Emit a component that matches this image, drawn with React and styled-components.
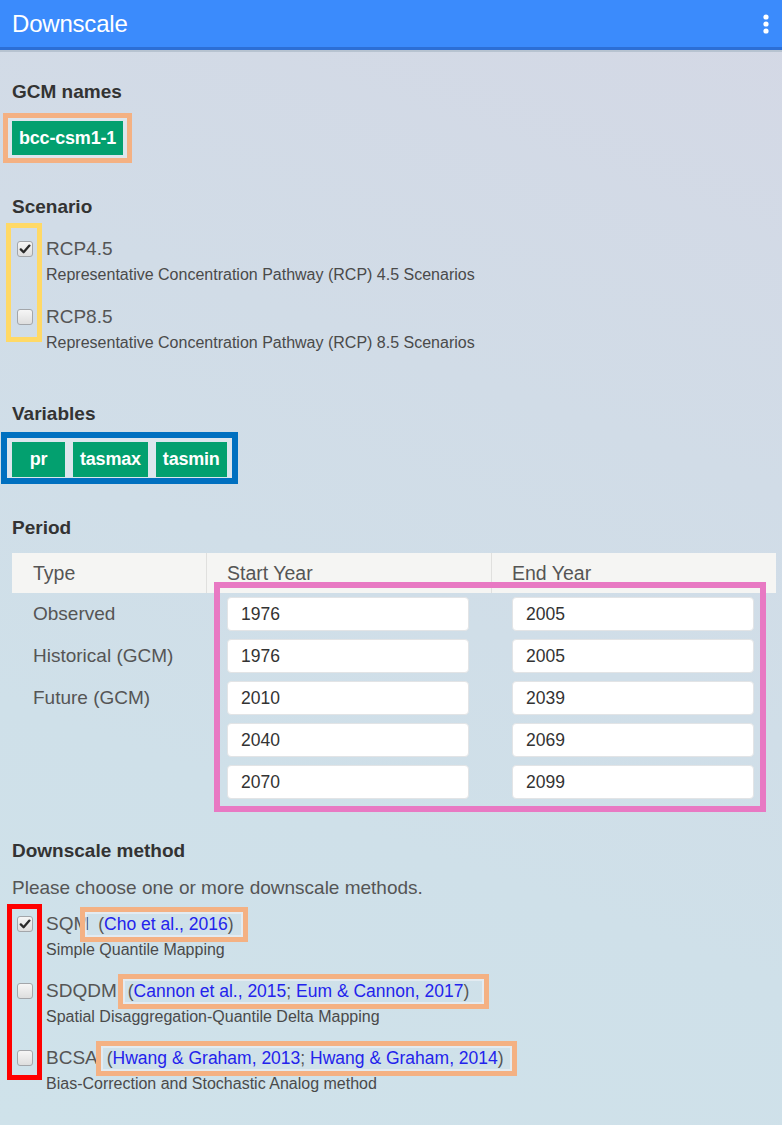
import React from 'react';
import styled, { createGlobalStyle } from 'styled-components';

const Global = createGlobalStyle`
  html, body { margin: 0; padding: 0; }
  body {
    font-family: "Liberation Sans", Arial, Helvetica, sans-serif;
    background: #d0dfe8;
  }
  * { box-sizing: border-box; }
`;

const Page = styled.div`
  width: 782px;
  min-height: 1125px;
  background: linear-gradient(200deg, #d4d8e5 0%, #d1dce7 35%, #cfe0e9 70%, #cfe2ea 100%);
  overflow: hidden;
`;

const Bar = styled.header`
  height: 50px;
  background: #3b8bfc;
  border-bottom: 3px solid #2c6fd6;
  box-shadow: 0 2px 0 #b7c3d0;
  display: flex;
  align-items: center;
  justify-content: space-between;
  padding: 0 13px 0 12px;
  color: #fff;
`;

const Title = styled.h1`
  margin: 0;
  font-size: 24px;
  font-weight: normal;
  letter-spacing: -0.2px;
`;

const Main = styled.main`
  padding: 0 12px;
`;

const Heading = styled.h3`
  margin: ${p => p.$mt}px 0 0;
  font-size: 19px;
  line-height: 22px;
  font-weight: bold;
  color: #333;
`;

const Mark = styled.div`
  display: inline-flex;
  gap: 8px;
  margin-top: ${p => p.$mt}px;
  margin-left: ${p => p.$ml}px;
  border: ${p => p.$bw}px solid ${p => p.$color};
  padding: ${p => p.$pad};
  background: #dde6ed;
`;

const Chip = styled.span`
  display: inline-flex;
  align-items: center;
  justify-content: center;
  height: ${p => p.$h || 35}px;
  min-width: 53px;
  padding: 0 7px;
  background: #03a06f;
  color: #fff;
  font-weight: bold;
  font-size: 18px;
  letter-spacing: -0.2px;
`;

const List = styled.div`
  position: relative;
  display: flex;
  flex-direction: column;
  gap: ${p => p.$gap}px;
  margin-top: ${p => p.$mt}px;
`;

const Outline = styled.div`
  position: absolute;
  pointer-events: none;
  border: ${p => p.$bw}px solid ${p => p.$color};
`;

const Item = styled.label`
  display: flex;
  align-items: flex-start;
  gap: 13px;
  padding-left: 5px;
`;

const BoxCell = styled.span`
  height: 24px;
  display: flex;
  align-items: center;
`;

const Box = styled.span`
  width: 16px;
  height: 16px;
  border-radius: 3px;
  border: 1px solid #a3a6aa;
  background: linear-gradient(#f6f6f6, #dedede);
  display: flex;
  align-items: center;
  justify-content: center;
`;

const TextCol = styled.span`
  display: flex;
  flex-direction: column;
`;

const LabelRow = styled.span`
  height: 24px;
  display: flex;
  align-items: center;
  font-size: 19px;
  color: #555;
  white-space: nowrap;
`;

const Sub = styled.span`
  margin-top: 4px;
  font-size: 16px;
  line-height: 20px;
  color: #4a4a4a;
  white-space: nowrap;
`;

const Cite = styled.span`
  display: inline-flex;
  align-items: center;
  flex: none;
  height: 35px;
  margin-left: ${p => p.$ml}px;
  padding: 0 ${p => p.$pr}px 0 ${p => p.$pl}px;
  border: 5px solid #f4b183;
  box-shadow: inset 0 0 0 2px rgba(235, 240, 244, 0.7);
  color: #555;
  font-size: 17.5px;
`;

const Ref = styled.a`
  color: #2323ec;
  text-decoration: none;
`;

const Note = styled.p`
  margin: ${p => p.$mt}px 0 0;
  font-size: 19px;
  line-height: 22px;
  color: #555;
`;

const Table = styled.div`
  position: relative;
  margin-top: ${p => p.$mt}px;
  width: 764px;
  display: grid;
  grid-template-columns: 194px 285px 285px;
`;

const Th = styled.div`
  height: 40px;
  background: #f5f5f3;
  border-left: ${p => (p.$first ? 'none' : '1px solid #e0e0de')};
  padding-left: ${p => (p.$first ? 21 : 20)}px;
  display: flex;
  align-items: center;
  font-size: 19.5px;
  color: #555;
`;

const Td = styled.div`
  height: 42px;
  padding: 4px ${p => (p.$input ? 22 : 0)}px 4px 21px;
  display: flex;
  align-items: center;
  font-size: 19px;
  color: #555;
`;

const YearInput = styled.input`
  width: 100%;
  height: 34px;
  border: 1px solid #e2e4e6;
  border-radius: 4px;
  background: #fff;
  padding: 0 13px;
  font-family: inherit;
  font-size: 17.5px;
  color: #333;
  outline: none;
`;

const Check = ({ checked }) => (
  <Box>
    {checked && (
      <svg width="12" height="12" viewBox="0 0 12 12">
        <path d="M1.8 6.4 L4.6 9.2 L10.4 2.6" fill="none" stroke="#2a2a2a" strokeWidth="2.3" strokeLinecap="round" strokeLinejoin="round" />
      </svg>
    )}
  </Box>
);

const Kebab = () => (
  <svg width="6" height="20" viewBox="0 0 6 20" aria-hidden="true">
    <circle cx="3" cy="3" r="2.6" fill="#fff" />
    <circle cx="3" cy="10" r="2.6" fill="#fff" />
    <circle cx="3" cy="17" r="2.6" fill="#fff" />
  </svg>
);

const periods = [
  { type: 'Observed', start: '1976', end: '2005' },
  { type: 'Historical (GCM)', start: '1976', end: '2005' },
  { type: 'Future (GCM)', start: '2010', end: '2039' },
  { type: '', start: '2040', end: '2069' },
  { type: '', start: '2070', end: '2099' },
];

const scenarios = [
  { name: 'RCP4.5', desc: 'Representative Concentration Pathway (RCP) 4.5 Scenarios', checked: true },
  { name: 'RCP8.5', desc: 'Representative Concentration Pathway (RCP) 8.5 Scenarios', checked: false },
];

const methods = [
  { name: 'SQM', desc: 'Simple Quantile Mapping', checked: true, refs: ['Cho et al., 2016'], ml: -9, pl: 13, pr: 9 },
  { name: 'SDQDM', desc: 'Spatial Disaggregation-Quantile Delta Mapping', checked: false, refs: ['Cannon et al., 2015', 'Eum & Cannon, 2017'], ml: 1, pl: 5, pr: 15 },
  { name: 'BCSA', desc: 'Bias-Correction and Stochastic Analog method', checked: false, refs: ['Hwang & Graham, 2013', 'Hwang & Graham, 2014'], ml: -2, pl: 6, pr: 8 },
];

export default function App() {
  return (
    <Page>
      <Global />
      <Bar>
        <Title>Downscale</Title>
        <Kebab />
      </Bar>
      <Main>
        <Heading $mt={31}>GCM names</Heading>
        <Mark $mt={10} $ml={-9} $bw={5} $color="#f4b183" $pad="3px 4px">
          <Chip $h={34}>bcc-csm1-1</Chip>
        </Mark>

        <Heading $mt={33}>Scenario</Heading>
        <List $mt={19} $gap={20}>
          {scenarios.map(s => (
            <Item key={s.name}>
              <BoxCell><Check checked={s.checked} /></BoxCell>
              <TextCol>
                <LabelRow>{s.name}</LabelRow>
                <Sub>{s.desc}</Sub>
              </TextCol>
            </Item>
          ))}
          <Outline $bw={5} $color="#ffd966" style={{ top: -14, left: -6, width: 36, height: 119 }} />
        </List>

        <Heading $mt={50}>Variables</Heading>
        <Mark $mt={7} $ml={-11} $bw={6} $color="#0070c0" $pad="4px 5px 1px">
          <Chip>pr</Chip>
          <Chip>tasmax</Chip>
          <Chip>tasmin</Chip>
        </Mark>

        <Heading $mt={33}>Period</Heading>
        <Table $mt={14}>
          <Th $first>Type</Th>
          <Th>Start Year</Th>
          <Th>End Year</Th>
          {periods.map((p, i) => (
            <React.Fragment key={i}>
              <Td>{p.type}</Td>
              <Td $input><YearInput readOnly value={p.start} /></Td>
              <Td $input><YearInput readOnly value={p.end} /></Td>
            </React.Fragment>
          ))}
          <Outline $bw={6} $color="#e879c3" style={{ top: 29, left: 202, width: 552, height: 230 }} />
        </Table>

        <Heading $mt={37}>Downscale method</Heading>
        <Note $mt={15}>Please choose one or more downscale methods.</Note>
        <List $mt={13} $gap={19}>
          {methods.map(m => (
            <Item key={m.name}>
              <BoxCell><Check checked={m.checked} /></BoxCell>
              <TextCol>
                <LabelRow>
                  {m.name}
                  <Cite $ml={m.ml} $pl={m.pl} $pr={m.pr}>
                    (
                    {m.refs.map((r, i) => (
                      <React.Fragment key={r}>
                        {i > 0 && ';\u00a0'}
                        <Ref href="#">{r}</Ref>
                      </React.Fragment>
                    ))}
                    )
                  </Cite>
                </LabelRow>
                <Sub>{m.desc}</Sub>
              </TextCol>
            </Item>
          ))}
          <Outline $bw={5} $color="#ff0000" style={{ top: -8, left: -5, width: 35, height: 176 }} />
        </List>
      </Main>
    </Page>
  );
}
